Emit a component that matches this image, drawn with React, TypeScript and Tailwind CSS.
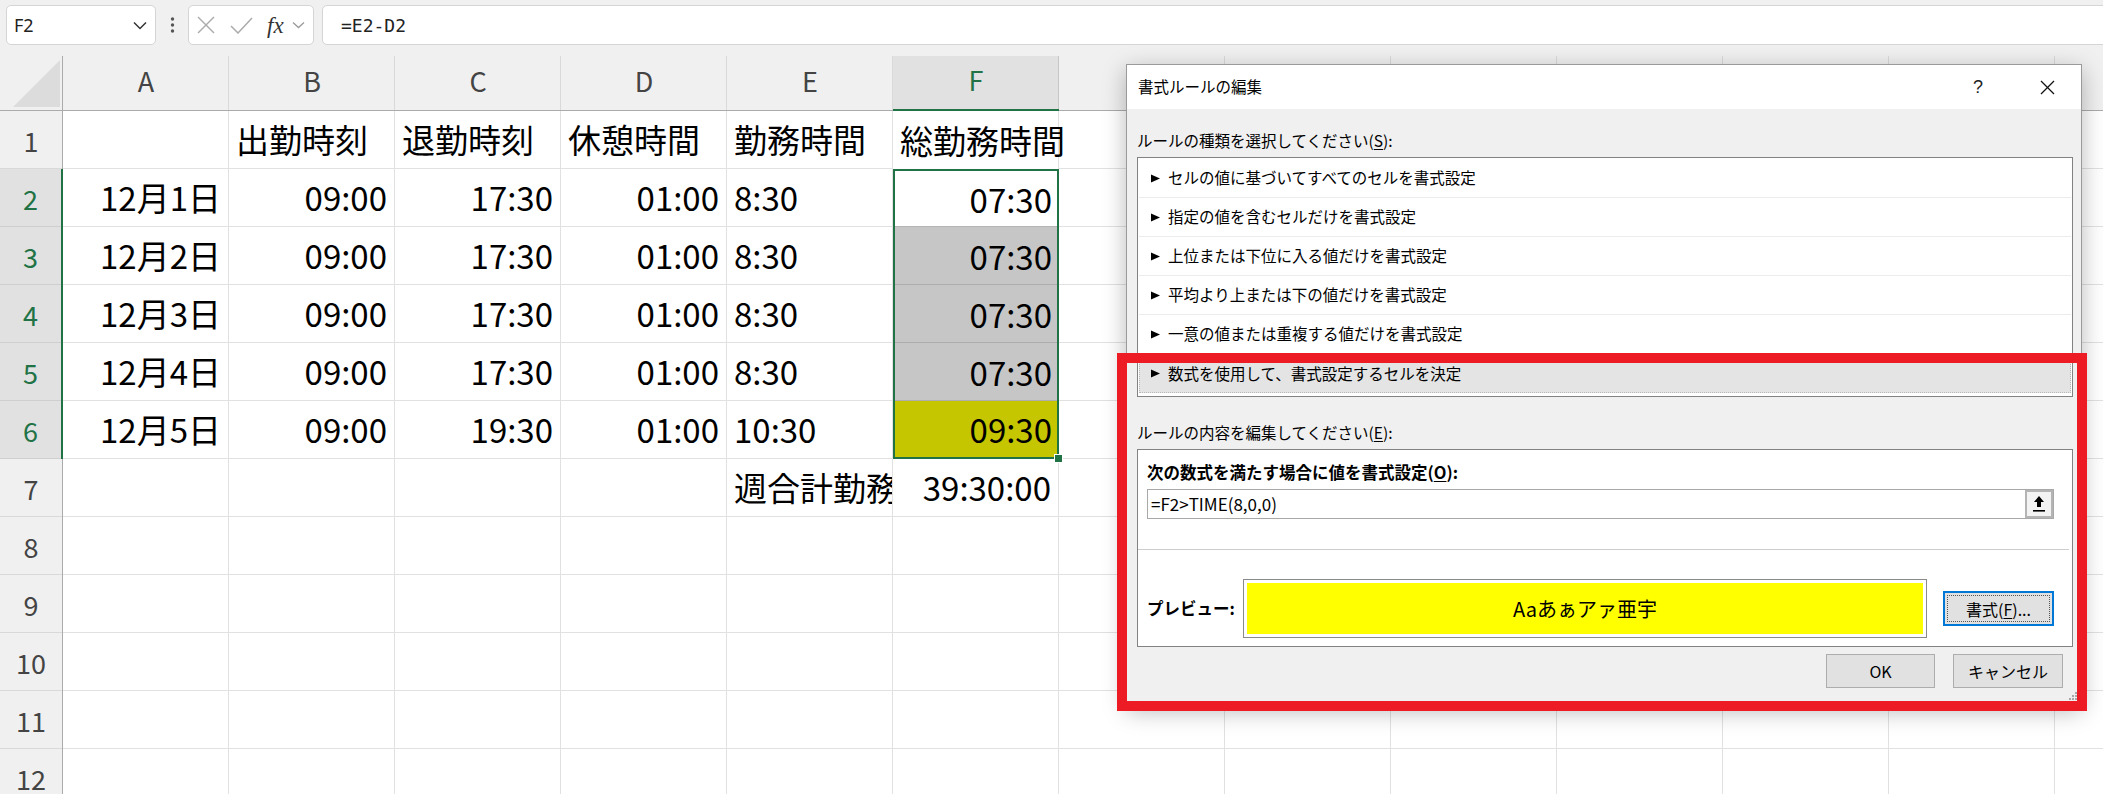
import React from 'react';

type C = { t: string; al: 'l' | 'r'; clip?: boolean } | null;

const COLS = ['A', 'B', 'C', 'D', 'E', 'F', 'G', 'H', 'I', 'J', 'K', 'L', 'M'];

const R = (t: string): C => ({ t, al: 'r' });
const L = (t: string): C => ({ t, al: 'l' });

const DATA: Record<number, C[]> = {
  1: [null, L('出勤時刻'), L('退勤時刻'), L('休憩時間'), L('勤務時間'), L('総勤務時間')],
  2: [R('12月1日'), R('09:00'), R('17:30'), R('01:00'), L('8:30'), R('07:30')],
  3: [R('12月2日'), R('09:00'), R('17:30'), R('01:00'), L('8:30'), R('07:30')],
  4: [R('12月3日'), R('09:00'), R('17:30'), R('01:00'), L('8:30'), R('07:30')],
  5: [R('12月4日'), R('09:00'), R('17:30'), R('01:00'), L('8:30'), R('07:30')],
  6: [R('12月5日'), R('09:00'), R('19:30'), R('01:00'), L('10:30'), R('09:30')],
  7: [null, null, null, null, { t: '週合計勤務時間', al: 'l', clip: true }, R('39:30:00')],
};

function frameFor(r: number, c: number): string {
  if (c === 5) {
    if (r === 1) return 'border-r border-[#e1e1e1]';
    if (r === 2) return 'border-x-2 border-t-2 border-[#217346] shadow-[inset_0_-1px_0_#b4b4b4]';
    if (r === 3 || r === 4 || r === 5) return 'border-x-2 border-[#217346] bg-[#c6c6c6] shadow-[inset_0_-1px_0_#adadad]';
    if (r === 6) return 'border-x-2 border-b-2 border-[#217346] bg-[#c6c600]';
  }
  return 'border-r border-b border-[#e1e1e1]';
}

function Cell({ r, c }: { r: number; c: number }) {
  const row = DATA[r] || [];
  const cell = row[c] || null;
  const inSel = c === 5 && r >= 2 && r <= 6;
  const align = cell
    ? cell.al === 'r'
      ? inSel
        ? 'justify-end pr-[5px]'
        : 'justify-end pr-[7px]'
      : 'justify-start pl-[7px]'
    : '';
  return (
    <div
      className={`relative shrink-0 w-[166px] h-full flex items-center whitespace-nowrap text-[33px] text-black ${frameFor(r, c)} ${align} ${cell && cell.clip ? 'overflow-hidden' : ''}`}
    >
      {cell ? <span className="leading-none">{cell.t}</span> : null}
      {c === 5 && r === 6 ? (
        <span className="absolute right-[-6px] bottom-[-6px] w-[9px] h-[9px] bg-[#217346] border border-white z-10" />
      ) : null}
    </div>
  );
}

function RowHeader({ r }: { r: number }) {
  const sel = r >= 2 && r <= 6;
  return (
    <div
      className={
        sel
          ? 'shrink-0 w-[63px] h-full flex items-center justify-center bg-[#e1e1e1] text-[#217346] border-r-2 border-[#217346] shadow-[inset_0_-1px_0_#cfcfcf] text-[27px] leading-none'
          : 'shrink-0 w-[63px] h-full flex items-center justify-center bg-[#f0f0f0] text-[#444] border-r border-[#ababab] shadow-[inset_0_-1px_0_#d9d9d9] text-[27px] leading-none'
      }
    >
      {r}
    </div>
  );
}

function Arrow() {
  return (
    <svg width="9" height="9" viewBox="0 0 9 9" className="shrink-0">
      <polygon points="0,0.5 9,4.5 0,8.5" fill="#000" />
    </svg>
  );
}

const RULES = [
  'セルの値に基づいてすべてのセルを書式設定',
  '指定の値を含むセルだけを書式設定',
  '上位または下位に入る値だけを書式設定',
  '平均より上または下の値だけを書式設定',
  '一意の値または重複する値だけを書式設定',
  '数式を使用して、書式設定するセルを決定',
];

export default function App() {
  const rows = [1, 2, 3, 4, 5, 6, 7, 8, 9, 10, 11, 12];
  return (
    <div className="relative w-[2103px] h-[794px] overflow-hidden bg-white font-['Noto_Sans_CJK_JP',sans-serif]">
      {/* Formula bar */}
      <div className="h-[56px] bg-[#f0f0f0] flex items-start pt-[5px] pl-[6px] overflow-hidden">
        <div className="shrink-0 w-[150px] h-[40px] bg-white border border-[#d5d5d5] rounded-[5px] flex items-center pl-[7px] pr-[8px]">
          <span className="text-[18px] text-[#222] font-['Noto_Sans',sans-serif]">F2</span>
          <svg width="14" height="9" viewBox="0 0 14 9" className="ml-auto">
            <polyline points="1,1.5 7,7.5 13,1.5" fill="none" stroke="#333" strokeWidth="1.5" />
          </svg>
        </div>
        <div className="shrink-0 w-[32px] h-[40px] flex items-center justify-center">
          <svg width="5" height="16" viewBox="0 0 5 16">
            <circle cx="2.5" cy="2" r="1.7" fill="#555" />
            <circle cx="2.5" cy="8" r="1.7" fill="#555" />
            <circle cx="2.5" cy="14" r="1.7" fill="#555" />
          </svg>
        </div>
        <div className="shrink-0 w-[126px] h-[40px] bg-white border border-[#d5d5d5] rounded-[5px] flex items-center pl-[8px]">
          <svg width="18" height="18" viewBox="0 0 18 18">
            <line x1="1" y1="1" x2="17" y2="17" stroke="#ababab" strokeWidth="1.5" />
            <line x1="17" y1="1" x2="1" y2="17" stroke="#ababab" strokeWidth="1.5" />
          </svg>
          <svg width="23" height="18" viewBox="0 0 23 18" className="ml-[15px]">
            <polyline points="1,10 8,17 22,2" fill="none" stroke="#ababab" strokeWidth="1.5" />
          </svg>
          <span className="ml-[14px] font-['Liberation_Serif',serif] italic text-[23px] leading-none text-[#333]">fx</span>
          <svg width="13" height="8" viewBox="0 0 13 8" className="ml-[8px]">
            <polyline points="1,1.5 6.5,6.5 12,1.5" fill="none" stroke="#9a9a9a" strokeWidth="1.3" />
          </svg>
        </div>
        <div className="shrink-0 ml-[8px] w-[1800px] h-[40px] bg-white border border-[#d5d5d5] rounded-[5px] flex items-center pl-[18px]">
          <span className="font-['DejaVu_Sans_Mono',monospace] text-[18px] text-[#222]">=E2-D2</span>
        </div>
      </div>

      {/* Sheet */}
      <div className="flex flex-col">
        <div className="flex h-[55px] bg-[#f0f0f0]">
          <div className="relative shrink-0 w-[63px] h-full border-r border-b border-[#ababab]">
            <svg width="63" height="55" viewBox="0 0 63 55" className="absolute left-0 top-0">
              <polygon points="13,51 60,4 60,51" fill="#dcdcdc" />
            </svg>
          </div>
          {COLS.map((c, i) =>
            i === 5 ? (
              <div
                key={c}
                className="shrink-0 w-[166px] h-full flex items-center justify-center pb-[6px] bg-[#e1e1e1] text-[#217346] border-b-2 border-[#217346] shadow-[inset_-1px_0_0_#c6c6c6] text-[27px] leading-none"
              >
                {c}
              </div>
            ) : (
              <div
                key={c}
                className="shrink-0 w-[166px] h-full flex items-center justify-center pb-[6px] text-[#444] border-b border-[#ababab] shadow-[inset_-1px_0_0_#d9d9d9] text-[27px] leading-none"
              >
                {c}
              </div>
            )
          )}
        </div>
        {rows.map((r) => (
          <div key={r} className="flex h-[58px] shrink-0">
            <RowHeader r={r} />
            {COLS.map((_, c) => (
              <Cell key={c} r={r} c={c} />
            ))}
          </div>
        ))}
      </div>

      {/* Dialog */}
      <div className="absolute left-[1126px] top-[64px] w-[956px] h-[641px] bg-[#f0f0f0] border border-[#9a9a9a] shadow-[0_6px_22px_rgba(0,0,0,0.28)] flex flex-col text-black">
        <div className="h-[44px] shrink-0 bg-white flex items-center pl-[11px]">
          <span className="text-[15.5px]">書式ルールの編集</span>
          <div className="ml-auto mr-[11px] flex items-center gap-[23px]">
            <span className="w-[46px] text-center text-[18px] font-['Liberation_Sans',sans-serif] text-[#222]">?</span>
            <div className="w-[46px] flex justify-center">
              <svg width="15" height="15" viewBox="0 0 15 15">
                <line x1="1" y1="1" x2="14" y2="14" stroke="#111" strokeWidth="1.2" />
                <line x1="14" y1="1" x2="1" y2="14" stroke="#111" strokeWidth="1.2" />
              </svg>
            </div>
          </div>
        </div>
        <div className="flex flex-col pl-[10px] pr-[8px]">
          <div className="mt-[20px] h-[24px] flex items-center text-[15.5px]">
            ルールの種類を選択してください(<span className="underline underline-offset-2">S</span>):
          </div>
          <div className="mt-[4px] h-[240px] bg-white border border-[#828282] p-[1px] flex flex-col">
            {RULES.map((t, i) =>
              i === 5 ? (
                <div
                  key={t}
                  className="h-[39px] shrink-0 flex items-center pl-[11px] bg-[#e4e4e4] border border-dotted border-[#b8b8b8]"
                >
                  <Arrow />
                  <span className="ml-[8px] text-[15.5px]">{t}</span>
                </div>
              ) : (
                <div key={t} className="h-[39px] shrink-0 flex items-center pl-[12px] border-b border-[#ececec]">
                  <Arrow />
                  <span className="ml-[8px] text-[15.5px]">{t}</span>
                </div>
              )
            )}
          </div>
          <div className="mt-[24px] h-[24px] flex items-center text-[15.5px]">
            ルールの内容を編集してください(<span className="underline underline-offset-2">E</span>):
          </div>
          <div className="mt-[4px] h-[198px] bg-white border border-[#828282] flex flex-col pl-[9px] pr-[3px]">
            <div className="mt-[10px] h-[24px] flex items-center text-[16.5px] font-bold">
              次の数式を満たす場合に値を書式設定(<span className="underline underline-offset-2">O</span>):
            </div>
            <div className="mt-[5px] h-[30px] w-[907px] border border-[#a8a8a8] flex">
              <div className="flex-1 flex items-center pl-[3px] text-[17px]">=F2&gt;TIME(8,0,0)</div>
              <div className="w-[28px] h-full border-2 border-[#b4b4b4] bg-[#f3f3f3] flex items-center justify-center">
                <svg width="12" height="18" viewBox="0 0 12 18">
                  <polygon points="6,1 11,7 8,7 8,12 4,12 4,7 1,7" fill="#000" />
                  <rect x="0" y="15" width="12" height="1.6" fill="#000" />
                </svg>
              </div>
            </div>
            <div className="mt-[30px] -ml-[9px] h-[1px] bg-[#cdcdcd]" />
            <div className="mt-[29px] h-[59px] flex items-center">
              <div className="w-[96px] text-[16.5px] font-bold">プレビュー:</div>
              <div className="w-[684px] h-[59px] border border-[#8a8a8a] bg-white p-[3px]">
                <div className="w-full h-full bg-[#ffff00] flex items-center justify-center text-[20px]">Aaあぁアァ亜宇</div>
              </div>
              <div className="ml-[16px] relative w-[111px] h-[35px] border-2 border-[#0078d7] bg-[#e1e1e1] flex items-center justify-center text-[16px]">
                書式(<span className="underline underline-offset-2">F</span>)...
                <span className="absolute inset-[2px] border border-dotted border-[#555]" />
              </div>
            </div>
          </div>
          <div className="mt-[7px] mr-[10px] flex justify-end gap-[18px]">
            <div className="w-[109px] h-[34px] bg-[#e1e1e1] border border-[#adadad] flex items-center justify-center text-[16px]">OK</div>
            <div className="w-[110px] h-[34px] bg-[#e1e1e1] border border-[#adadad] flex items-center justify-center text-[16px]">キャンセル</div>
          </div>
        </div>
        <svg width="10" height="10" viewBox="0 0 10 10" className="absolute right-[3px] bottom-[3px]">
          <rect x="7" y="1" width="2" height="2" fill="#a8a8a8" />
          <rect x="4" y="4" width="2" height="2" fill="#a8a8a8" />
          <rect x="7" y="4" width="2" height="2" fill="#a8a8a8" />
          <rect x="1" y="7" width="2" height="2" fill="#a8a8a8" />
          <rect x="4" y="7" width="2" height="2" fill="#a8a8a8" />
          <rect x="7" y="7" width="2" height="2" fill="#a8a8a8" />
        </svg>
      </div>

      {/* Red annotation box */}
      <div className="absolute left-[1117px] top-[353px] w-[970px] h-[358px] border-[10px] border-[#ed1c24]" />
    </div>
  );
}
